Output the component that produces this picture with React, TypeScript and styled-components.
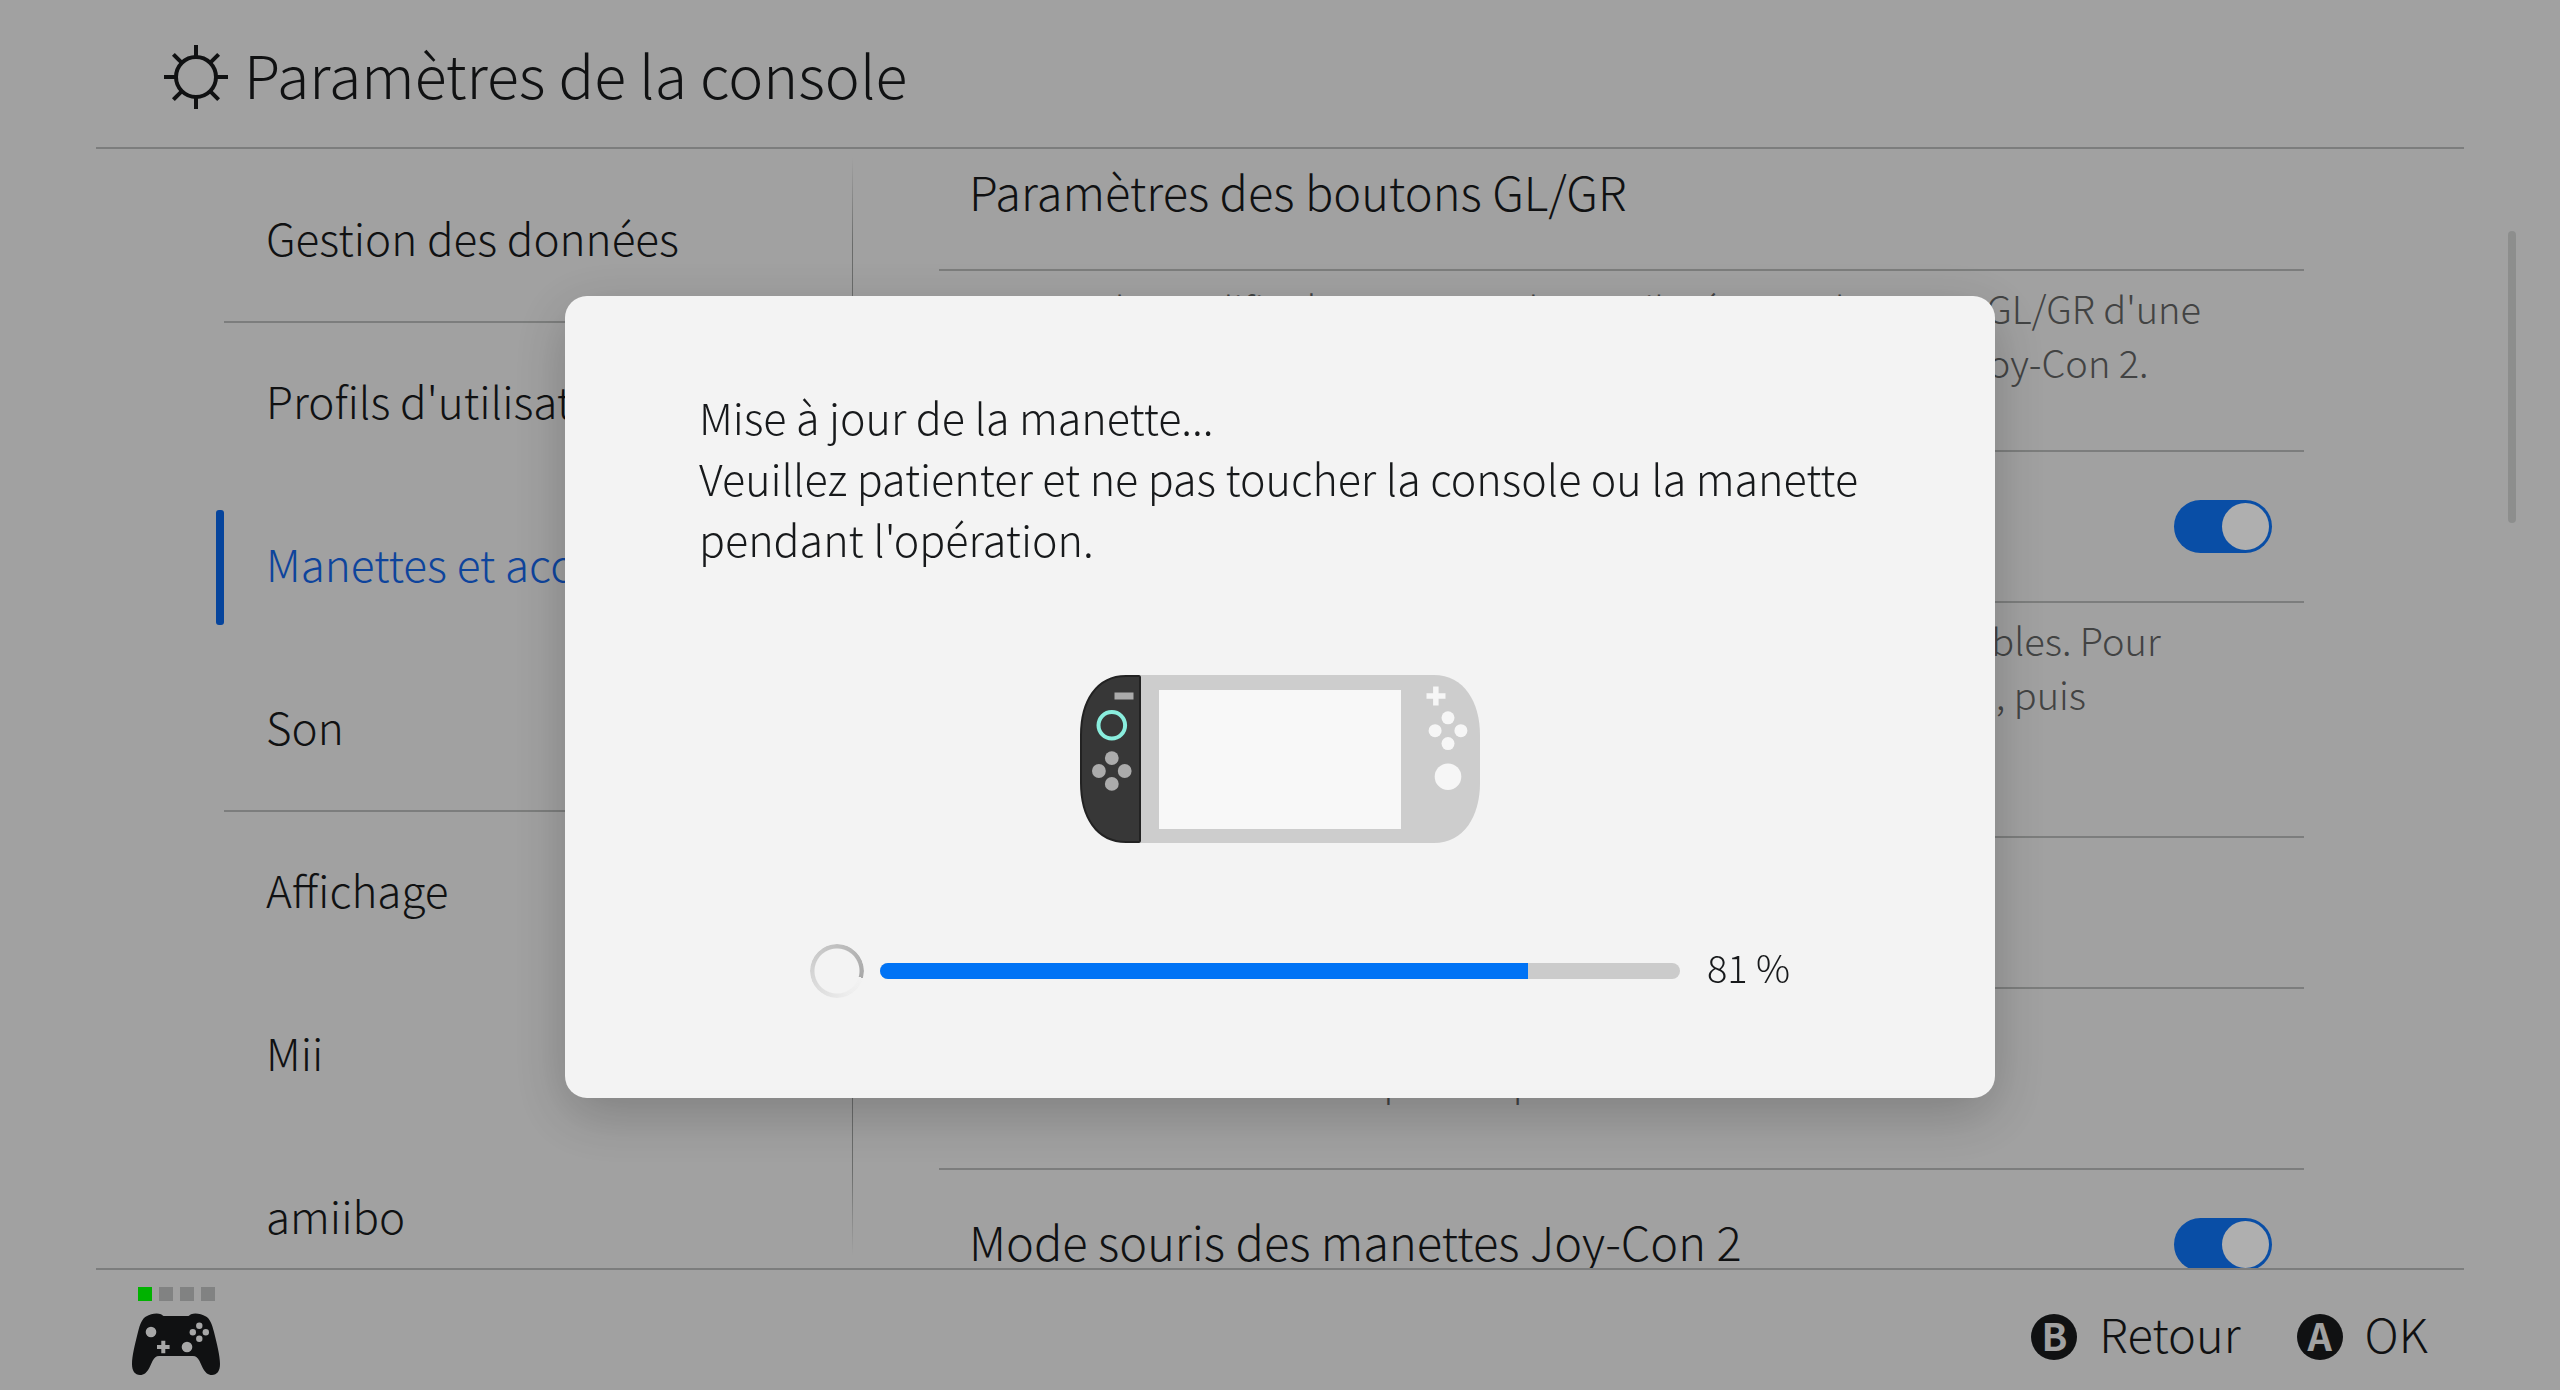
import React from "react";
import styled, { createGlobalStyle } from "styled-components";

const ink = "#17191b";
const rule = "#b2b4b3";

const GlobalStyle = createGlobalStyle`
  *, *::before, *::after { box-sizing: border-box; }
  body { margin: 0; background: #e7e7e7; }
  body, button { font-family: "Noto Sans CJK JP", "Noto Sans", sans-serif; font-weight: 300; color: ${ink}; }
`;

const Page = styled.div`
  display: flex;
  flex-direction: column;
  height: 100vh;
  overflow: hidden;
  background: #e7e7e7;
`;

const Header = styled.header`
  display: flex;
  align-items: center;
  gap: 16px;
  height: 149px;
  flex: none;
  margin: 0 96px;
  padding: 6px 68px 0;
  border-bottom: 2px solid ${rule};
`;

const Title = styled.h1`
  margin: 0;
  padding-bottom: 6px;
  font-size: 59px;
  font-weight: 300;
  line-height: 80px;
`;

const Body = styled.div`
  display: flex;
  flex: 1;
  min-height: 0;
`;

const Sidebar = styled.nav`
  flex: none;
  width: 636px;
  margin-left: 216px;
  padding-top: 11px;
  overflow: hidden;
`;

const MenuItem = styled.button<{ $active?: boolean }>`
  display: flex;
  align-items: center;
  width: 100%;
  padding: 0;
  border: 0;
  background: none;
  text-align: left;
  font-size: 44px;
  line-height: 60px;
  color: ${(p) => (p.$active ? "#1462e0" : ink)};
`;

const Marker = styled.span<{ $active?: boolean }>`
  width: 8px;
  height: 115px;
  border-radius: 3px;
  background: ${(p) => (p.$active ? "#0a62e0" : "transparent")};
`;

const MenuLabel = styled.span<{ $ruled?: boolean }>`
  display: flex;
  align-items: center;
  flex: 1;
  height: 163px;
  padding: 0 0 8px 42px;
  white-space: nowrap;
  border-bottom: 2px solid ${(p) => (p.$ruled ? rule : "transparent")};
`;

const Separator = styled.div`
  flex: none;
  width: 1px;
  margin: 8px 0 12px;
  background: linear-gradient(transparent, #989a99 8%, #989a99 92%, transparent);
`;

const Content = styled.main`
  flex: 1;
  min-width: 0;
  margin: 0 204px 0 86px;
  overflow: hidden;
`;

const SettingsList = styled.div`
  margin-top: -29px;
`;

const SettingRow = styled.label`
  display: flex;
  align-items: center;
  justify-content: space-between;
  height: 151px;
  padding: 0 32px 0 30px;
  border-bottom: 2px solid ${rule};
  font-size: 47px;
  line-height: 60px;
  white-space: nowrap;
`;

const SettingName = styled.span`
  padding-bottom: 8px;
`;

const Description = styled.p`
  margin: 0;
  padding: 10px 32px 61px 30px;
  border-bottom: 2px solid ${rule};
  font-size: 38px;
  line-height: 54px;
  color: #5f6161;
  white-space: nowrap;
`;

const Toggle = styled.input`
  appearance: none;
  display: flex;
  align-items: center;
  width: 98px;
  height: 53px;
  margin: 0;
  padding: 3px;
  border-radius: 27px;
  background: #b0b0b0;
  &::before {
    content: "";
    width: 47px;
    height: 47px;
    border-radius: 50%;
    background: #fbfbfb;
  }
  &:checked {
    justify-content: flex-end;
    background: #0e70ee;
  }
`;

const ScrollRail = styled.div`
  flex: none;
  width: 8px;
  margin-right: 44px;
  padding-top: 82px;
`;

const ScrollThumb = styled.div`
  height: 292px;
  border-radius: 4px;
  background: #cacccb;
`;

const Footer = styled.footer`
  display: flex;
  align-items: center;
  justify-content: space-between;
  flex: none;
  height: 122px;
  margin: 0 96px;
  padding: 0 36px;
  border-top: 2px solid ${rule};
`;

const PlayerStatus = styled.div`
  display: flex;
  flex-direction: column;
  align-items: center;
  gap: 12px;
  padding-top: 2px;
`;

const Lights = styled.div`
  display: flex;
  gap: 7px;
`;

const Light = styled.span<{ $on?: boolean }>`
  width: 14px;
  height: 14px;
  background: ${(p) => (p.$on ? "#00ff00" : "#b9bbba")};
`;

const Actions = styled.div`
  display: flex;
  gap: 56px;
  padding-top: 14px;
`;

const Action = styled.button`
  display: flex;
  align-items: center;
  gap: 22px;
  padding: 0;
  border: 0;
  background: none;
  font-size: 47px;
  line-height: 60px;
`;

const ActionName = styled.span`
  padding-bottom: 8px;
`;

const Key = styled.span`
  width: 46px;
  height: 46px;
  border-radius: 50%;
  background: ${ink};
  color: #e7e7e7;
  font-size: 38px;
  font-weight: 700;
  line-height: 42px;
  text-align: center;
`;

const Backdrop = styled.div`
  position: fixed;
  inset: 0;
  display: flex;
  align-items: center;
  justify-content: center;
  padding-top: 4px;
  background: rgba(0, 0, 0, 0.3);
`;

const Dialog = styled.section`
  display: flex;
  flex-direction: column;
  width: 1430px;
  max-width: 100%;
  padding: 90px 134px 100px;
  border-radius: 22px;
  background: #f3f3f3;
  box-shadow: 0 16px 56px rgba(0, 0, 0, 0.22);
`;

const Message = styled.p`
  margin: 0;
  font-size: 43px;
  line-height: 61px;
  white-space: pre;
`;

const Console = styled.svg`
  align-self: center;
  margin: 106px 0 101px;
`;

const ProgressRow = styled.div`
  display: flex;
  align-items: center;
  padding-left: 111px;
`;

const Spinner = styled.div`
  width: 54px;
  height: 54px;
  margin-right: 16px;
  border-radius: 50%;
  background: conic-gradient(from 105deg, transparent, #ececec 15%, #d0d0d0 50%, #a8a8a8);
  mask: radial-gradient(closest-side, transparent 22px, #000 23px);
`;

const Track = styled.div`
  width: 800px;
  height: 16px;
  margin-right: 27px;
  border-radius: 8px;
  overflow: hidden;
  background: #cbcbcb;
`;

const Fill = styled.div`
  height: 100%;
  background: #0073f5;
`;

const Percent = styled.span`
  padding-bottom: 8px;
  font-size: 38px;
  line-height: 46px;
  white-space: nowrap;
`;

const menu = [
  { label: "Gestion des données", ruled: true },
  { label: "Profils d'utilisateur" },
  { label: "Manettes et accessoires", active: true },
  { label: "Son", ruled: true },
  { label: "Affichage" },
  { label: "Mii" },
  { label: "amiibo" },
];

function SettingsIcon() {
  return (
    <svg width="64" height="64" viewBox="-32 -32 64 64" fill="none" stroke={ink} strokeWidth="4" aria-hidden="true">
      <circle r="20" />
      {[0, 45, 90, 135, 180, 225, 270, 315].map((a) => (
        <path key={a} d="M0 -21V-32" transform={`rotate(${a})`} />
      ))}
    </svg>
  );
}

function Dots({ x, y, d, r }: { x: number; y: number; d: number; r: number }) {
  return (
    <>
      <circle cx={x} cy={y - d} r={r} />
      <circle cx={x - d} cy={y} r={r} />
      <circle cx={x + d} cy={y} r={r} />
      <circle cx={x} cy={y + d} r={r} />
    </>
  );
}

function ControllerIcon() {
  return (
    <svg width="88" height="62" viewBox="0 0 88 62" aria-hidden="true">
      <path
        fill={ink}
        d="M14 3.5C19 .5 25 -.3 29 1.2L31.5 3H56.5L59 1.2C63 -.3 69 .5 74 3.5C78 6 80 11 82 19C85 31 88 43 88 51C88 58 85 62 80 62C76 62 73 59.5 70.5 54.5L67.5 48C65.5 44.5 64 43 61 43H27C24 43 22.5 44.5 20.5 48L17.5 54.5C15 59.5 12 62 8 62C3 62 0 58 0 51C0 43 3 31 6 19C8 11 10 6 14 3.5Z"
      />
      <g fill="#f0f0f0">
        <circle cx="19" cy="19" r="5.3" />
        <circle cx="55" cy="34" r="5.3" />
        <Dots x={67.3} y={19.3} d={6.5} r={3.2} />
        <path d="M29.3 27.7H33.3V32H37.6V36H33.3V40.3H29.3V36H25V32H29.3Z" />
      </g>
    </svg>
  );
}

function ConsoleDrawing() {
  return (
    <Console width="400" height="168" viewBox="0 0 400 168" aria-hidden="true">
      <path fill="#cdcdcd" d="M61 0H354C384 0 400 27 400 60V108C400 141 384 168 354 168H61Z" />
      <path
        fill="#373737"
        stroke="#222"
        strokeWidth="2"
        d="M59 1H46C16 1 1 27 1 60V108C1 141 16 167 46 167H59Q60 167 60 166V2Q60 1 59 1Z"
      />
      <rect x="79" y="15" width="242" height="139" fill="#f8f8f8" />
      <rect x="34.5" y="17.5" width="19" height="7" fill="#ababab" />
      <circle cx="31.8" cy="50.3" r="13.3" fill="none" stroke="#8aeede" strokeWidth="4" />
      <g fill="#ababab">
        <Dots x={31.8} y={96} d={12.9} r={6.9} />
      </g>
      <g fill="#f6f6f6">
        <path d="M353.1 11.5H358.6V18.3H365.5V23.8H358.6V30.5H353.1V23.8H346.5V18.3H353.1Z" />
        <Dots x={368} y={55.7} d={12.9} r={6.5} />
        <circle cx="368" cy="101.7" r="13.3" />
      </g>
    </Console>
  );
}

export default function App() {
  const progress = 81;
  return (
    <>
      <GlobalStyle />
      <Page lang="fr">
        <Header>
          <SettingsIcon />
          <Title>Paramètres de la console</Title>
        </Header>
        <Body>
          <Sidebar>
            {menu.map((m) => (
              <MenuItem key={m.label} type="button" $active={m.active}>
                <Marker $active={m.active} />
                <MenuLabel $ruled={m.ruled}>{m.label}</MenuLabel>
              </MenuItem>
            ))}
          </Sidebar>
          <Separator />
          <Content>
            <SettingsList>
              <SettingRow as="div">
                <SettingName>Paramètres des boutons GL/GR</SettingName>
              </SettingRow>
              <Description>
                Permet de modifier les commandes attribuées aux boutons GL/GR d'une
                <br />
                manette Pro Nintendo Switch 2 ou d'une base de recharge Joy-Con 2.
              </Description>
              <SettingRow>
                <SettingName>Vibration des manettes</SettingName>
                <Toggle type="checkbox" role="switch" defaultChecked />
              </SettingRow>
              <Description>
                Activez la vibration des manettes et des accessoires compatibles. Pour
                <br />
                régler ces manettes, maintenez le bouton SYNCHRO enfoncé, puis
                <br />
                sélectionnez la manette.
              </Description>
              <SettingRow as="div">
                <SettingName>Mise à jour des manettes</SettingName>
              </SettingRow>
              <Description>
                Recherche les mises à jour des manettes
                <br />
                connectées à la console pour la première fois.
              </Description>
              <SettingRow>
                <SettingName>Mode souris des manettes Joy-Con 2</SettingName>
                <Toggle type="checkbox" role="switch" defaultChecked />
              </SettingRow>
            </SettingsList>
          </Content>
          <ScrollRail>
            <ScrollThumb />
          </ScrollRail>
        </Body>
        <Footer>
          <PlayerStatus>
            <Lights>
              <Light $on />
              <Light />
              <Light />
              <Light />
            </Lights>
            <ControllerIcon />
          </PlayerStatus>
          <Actions>
            <Action type="button">
              <Key>B</Key>
              <ActionName>Retour</ActionName>
            </Action>
            <Action type="button">
              <Key>A</Key>
              <ActionName>OK</ActionName>
            </Action>
          </Actions>
        </Footer>
      </Page>
      <Backdrop>
        <Dialog role="dialog" aria-modal="true" aria-labelledby="update-message" lang="fr">
          <Message id="update-message">
            {"Mise à jour de la manette...\nVeuillez patienter et ne pas toucher la console ou la manette\npendant l'opération."}
          </Message>
          <ConsoleDrawing />
          <ProgressRow>
            <Spinner />
            <Track role="progressbar" aria-valuenow={progress} aria-valuemin={0} aria-valuemax={100} aria-label="Mise à jour">
              <Fill style={{ width: `${progress}%` }} />
            </Track>
            <Percent>{progress} %</Percent>
          </ProgressRow>
        </Dialog>
      </Backdrop>
    </>
  );
}
